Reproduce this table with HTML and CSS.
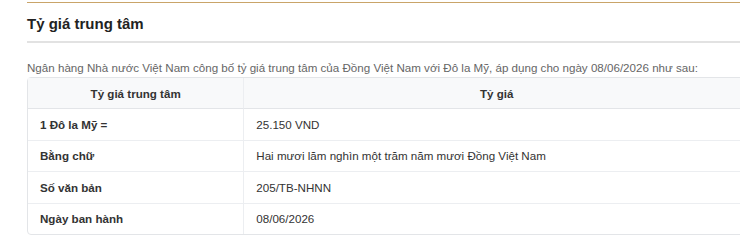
FILE: index.html
```html
<!DOCTYPE html>
<html lang="vi">
<head>
    <meta charset="UTF-8">
    <meta name="viewport" content="width=device-width, initial-scale=1.0">
    <title>Tỷ giá trung tâm</title>
    <link rel="stylesheet" href="styles.css">
</head>
<body>
    <section class="rate-box">
        <div class="rate-head">
            <h2>Tỷ giá trung tâm</h2>
        </div>

        <p class="rate-note">Ngân hàng Nhà nước Việt Nam công bố tỷ giá trung tâm của Đồng Việt Nam với Đô la Mỹ, áp dụng cho ngày 08/06/2026 như sau:</p>

        <table class="rate-table">
            <thead>
                <tr>
                    <th class="col-label">Tỷ giá trung tâm</th>
                    <th>Tỷ giá</th>
                </tr>
            </thead>
            <tbody>
                <tr>
                    <td class="label">1 Đô la Mỹ =</td>
                    <td>25.150 VND</td>
                </tr>
                <tr>
                    <td class="label">Bằng chữ</td>
                    <td>Hai mươi lăm nghìn một trăm năm mươi Đồng Việt Nam</td>
                </tr>
                <tr>
                    <td class="label">Số văn bản</td>
                    <td>205/TB-NHNN</td>
                </tr>
                <tr>
                    <td class="label">Ngày ban hành</td>
                    <td>08/06/2026</td>
                </tr>
            </tbody>
        </table>
    </section>
</body>
</html>
```

FILE: styles.css
```css
body {
    font-family: 'Liberation Sans', Arial, sans-serif;
    background: #fff;
    color: #333;
    margin: 0;
    overflow: hidden;
}
.rate-box {
    width: 723px;
    margin: 2px 0 0 27px;
    border-top: 1px solid #c9a469;
}
.rate-head {
    padding: 12px 0 8px;
    border-bottom: 2px solid #e2e2e2;
}
.rate-head h2 {
    margin: 0;
    font-size: 15px;
    line-height: 18px;
    font-weight: bold;
    color: #222;
}
.rate-note {
    margin: 18px 0 2px;
    font-size: 11.6px;
    line-height: 14px;
    color: #666;
}
.rate-table {
    width: 100%;
    border-collapse: separate;
    border-spacing: 0;
    border: 1px solid #e3e5e8;
    border-radius: 4px;
    font-size: 11.6px;
    color: #333;
}
.rate-table th,
.rate-table td {
    padding: 0 12px;
    text-align: left;
    border-bottom: 1px solid #eceef1;
    border-right: 1px solid #eceef1;
}
.rate-table th:last-child,
.rate-table td:last-child {
    border-right: none;
}
.rate-table th {
    height: 30px;
    background: #f8f9fa;
    text-align: center;
    font-weight: bold;
    border-bottom-color: #e3e5e8;
}
.rate-table td {
    height: 30.5px;
}
.rate-table tbody tr:last-child td {
    border-bottom: none;
}
.col-label {
    width: 30%;
}
.label {
    font-weight: bold;
}
```
